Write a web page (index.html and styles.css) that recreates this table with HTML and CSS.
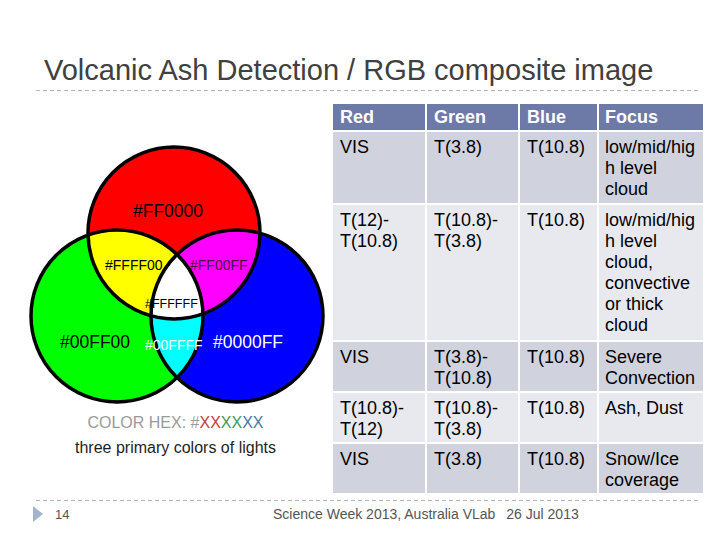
FILE: index.html
```html
<!DOCTYPE html>
<html lang="en">
<head>
<meta charset="utf-8">
<title>Volcanic Ash Detection / RGB composite image</title>
<link rel="stylesheet" href="styles.css">
</head>
<body>
<div class="slide">
  <header class="title-bar">
    <h1>Volcanic Ash Detection / RGB composite image</h1>
  </header>

  <main class="content">
    <section class="diagram">
      <svg class="venn" viewBox="28 140 300 270" width="300" height="270" aria-label="RGB additive colour diagram">
        <defs>
          <clipPath id="clip-red"><circle cx="174" cy="233" r="86"/></clipPath>
          <clipPath id="clip-green"><circle cx="117" cy="316" r="86"/></clipPath>
        </defs>
        <circle cx="174" cy="233" r="86" fill="#ff0000"/>
        <circle cx="117" cy="316" r="86" fill="#00ff00"/>
        <circle cx="237" cy="316" r="86" fill="#0000ff"/>
        <g clip-path="url(#clip-red)">
          <circle cx="117" cy="316" r="86" fill="#ffff00"/>
          <circle cx="237" cy="316" r="86" fill="#ff00ff"/>
        </g>
        <g clip-path="url(#clip-green)">
          <circle cx="237" cy="316" r="86" fill="#00ffff"/>
        </g>
        <g clip-path="url(#clip-red)">
          <g clip-path="url(#clip-green)">
            <circle cx="237" cy="316" r="86" fill="#ffffff"/>
          </g>
        </g>
        <g fill="none" stroke="#000" stroke-width="3.5">
          <circle cx="174" cy="233" r="86"/>
          <circle cx="117" cy="316" r="86"/>
          <circle cx="237" cy="316" r="86"/>
        </g>
        <text class="lbl lbl-big" x="133" y="217">#FF0000</text>
        <text class="lbl lbl-mid" x="105" y="270">#FFFF00</text>
        <text class="lbl lbl-mid lbl-purple" x="190" y="270">#FF00FF</text>
        <text class="lbl lbl-small" x="145" y="308">#FFFFFF</text>
        <text class="lbl lbl-big" x="60" y="348">#00FF00</text>
        <text class="lbl lbl-mid lbl-white" x="145" y="350">#00FFFF</text>
        <text class="lbl lbl-big lbl-white" x="213" y="348">#0000FF</text>
      </svg>
      <p class="hex">COLOR HEX: #<span class="x-red">XX</span><span class="x-green">XX</span><span class="x-blue">XX</span></p>
      <p class="caption">three primary colors of lights</p>
    </section>

    <table class="rgb">
      <colgroup>
        <col class="c-red"><col class="c-green"><col class="c-blue"><col class="c-focus">
      </colgroup>
      <thead>
        <tr class="row-head"><th>Red</th><th>Green</th><th>Blue</th><th>Focus</th></tr>
      </thead>
      <tbody>
        <tr class="row-dark row-tall">
          <td>VIS</td><td>T(3.8)</td><td>T(10.8)</td>
          <td class="focus">low/mid/high level cloud</td>
        </tr>
        <tr class="row-light row-xtall">
          <td>T(12)-T(10.8)</td><td>T(10.8)-T(3.8)</td><td>T(10.8)</td>
          <td class="focus">low/mid/high level cloud, convective or thick cloud</td>
        </tr>
        <tr class="row-dark row-std">
          <td>VIS</td><td>T(3.8)-T(10.8)</td><td>T(10.8)</td><td class="focus">Severe Convection</td>
        </tr>
        <tr class="row-light row-std">
          <td>T(10.8)-T(12)</td><td>T(10.8)-T(3.8)</td><td>T(10.8)</td><td class="focus">Ash, Dust</td>
        </tr>
        <tr class="row-dark row-std">
          <td>VIS</td><td>T(3.8)</td><td>T(10.8)</td><td class="focus">Snow/Ice coverage</td>
        </tr>
      </tbody>
    </table>
  </main>

  <footer class="foot">
    <div class="foot-row">
      <svg class="bullet" width="10" height="16" viewBox="0 0 10 16"><polygon points="0,0 10,8 0,16" fill="#a3b5cd"/></svg>
      <span class="page-no">14</span>
      <span class="event">Science Week 2013, Australia VLab</span>
      <span class="date">26 Jul 2013</span>
    </div>
  </footer>
</div>
</body>
</html>
```

FILE: styles.css
```css
html, body {
  margin: 0;
  padding: 0;
  background: #ffffff;
}

.slide {
  width: 720px;
  height: 540px;
  overflow: hidden;
  background: #ffffff;
  font-family: "Liberation Sans", Arial, sans-serif;
  color: #000;
}

/* Title */
.title-bar {
  margin: 0 20px 0 36px;
  padding: 53px 0 4px 8px;
  background: repeating-linear-gradient(to right, #b4b4b4 0 4px, transparent 4px 7px) left bottom / 100% 1px no-repeat;
  background-origin: border-box;
}

.title-bar h1 {
  margin: 0;
  font-size: 29px;
  line-height: 34px;
  font-weight: normal;
  color: #404040;
  white-space: nowrap;
}

/* Content */
.content {
  display: flex;
  align-items: flex-start;
  padding: 11px 0 0 28px;
}

.diagram {
  width: 303px;
  padding-top: 38px;
}

.venn {
  display: block;
}

.lbl {
  font-family: "Liberation Sans", Arial, sans-serif;
  fill: #000;
}
.lbl-big { font-size: 17.5px; }
.lbl-mid { font-size: 14px; }
.lbl-small { font-size: 12.5px; }
.lbl-white { fill: #ffffff; }
.lbl-purple { fill: #4a1048; }

.hex,
.caption {
  margin: 0;
  padding-right: 8px;
  text-align: center;
  font-size: 16px;
  line-height: 19px;
}

.hex {
  margin-top: 3px;
  color: #9a9a9a;
}
.x-red { color: #c83c3c; }
.x-green { color: #3f9a62; }
.x-blue { color: #3f79a8; }

.caption {
  margin-top: 6px;
  color: #1e1e1e;
}

/* Table */
.rgb {
  table-layout: fixed;
  border-collapse: separate;
  border-spacing: 2px;
  width: 374px;
  margin: 0;
  font-size: 18px;
  line-height: 21px;
}

.c-red { width: 92px; }
.c-green { width: 91px; }
.c-blue { width: 77px; }
.c-focus { width: 104px; }

.rgb th,
.rgb td {
  padding: 3px 5px 2px 7px;
  text-align: left;
  vertical-align: top;
}

.rgb td {
  padding-top: 5px;
}

.rgb td.focus,
.rgb th:last-child {
  padding-left: 6px;
}

.rgb td.focus {
  overflow-wrap: anywhere;
}

.rgb th {
  background: #6d79a7;
  color: #ffffff;
  font-weight: bold;
}

.row-head { height: 26px; }
.row-tall { height: 71px; }
.row-xtall { height: 135px; }
.row-std { height: 48px; }

.row-dark td { background: #d0d3dd; }
.row-light td { background: #e8e9ee; }

/* Footer */
.foot {
  margin: 5px 20px 0 33px;
  padding-top: 5px;
  background: repeating-linear-gradient(to right, #b4b4b4 0 4px, transparent 4px 7px) 3px top / 100% 1px no-repeat;
}

.foot-row {
  display: flex;
  align-items: center;
  height: 18px;
  font-size: 14px;
  color: #555555;
}

.bullet {
  display: block;
  flex: none;
}

.page-no {
  width: 218px;
  margin-left: 12px;
  font-size: 13px;
}

.date {
  margin-left: 11px;
}
```
